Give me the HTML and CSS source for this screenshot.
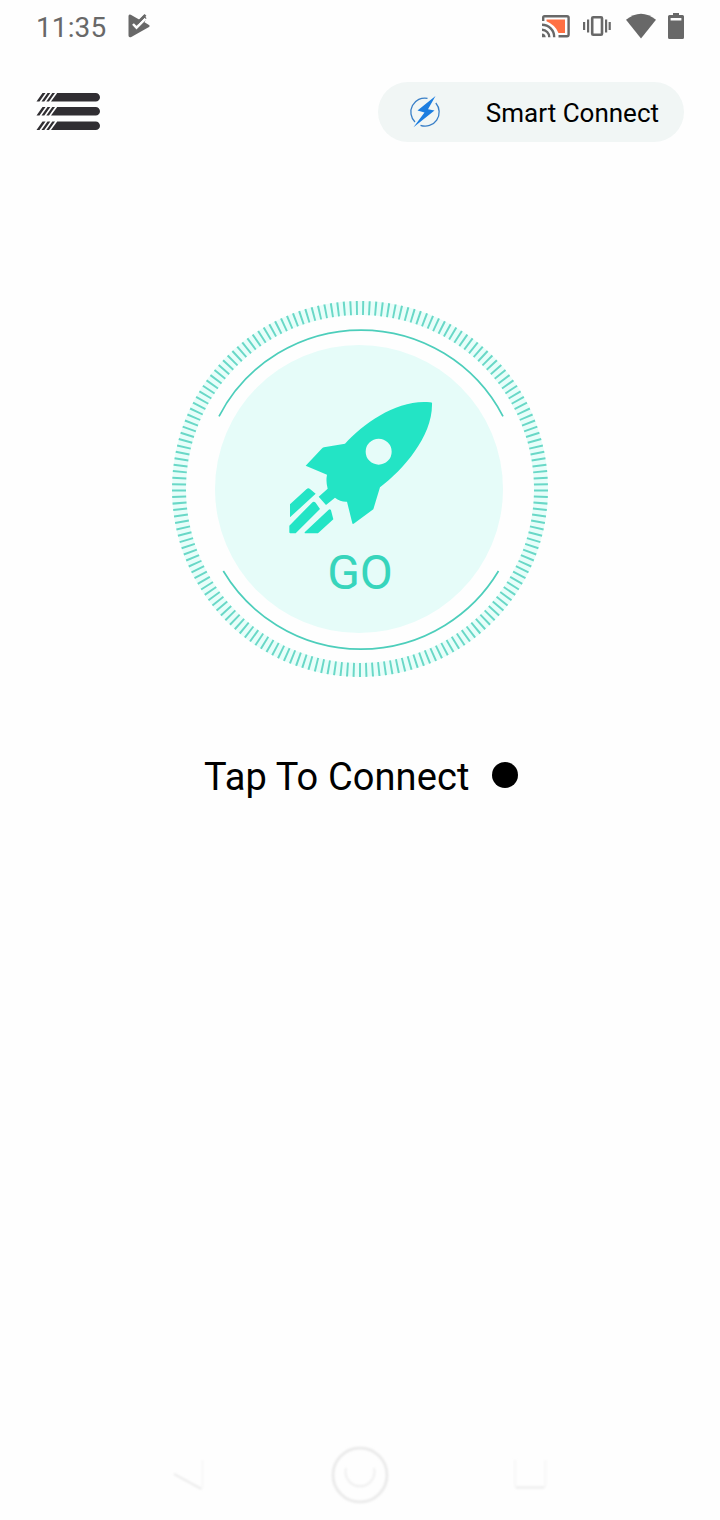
FILE: index.html
```html
<!DOCTYPE html>
<html lang="en">
<head>
<meta charset="utf-8">
<title>Smart Connect</title>
<link rel="stylesheet" href="styles.css">
</head>
<body>
<div class="screen">
  <div class="status">
    <span class="clock">11:35</span>
    <svg class="play" width="24" height="26" viewBox="0 0 24 26"><path d="M1.500 3.200Q1.500 .8 3.800 1.800L12.500 6.800L16.500 2.200L19.500 5L17.500 9.300L22 12Q23.500 13 22 14L4.300 24Q1.500 25 1.500 22.500Z" fill="#686868"/><path d="M6 11L9.500 14.600L18.500 5.600" fill="none" stroke="#fefefe" stroke-width="2.500"/><path d="M10 10.300L18.500 1.800" stroke="#686868" stroke-width="2.600"/></svg>
    <svg class="system" width="146" height="30" viewBox="540 10 146 30" fill="#686868">
      <path d="M546.500 19.500H565V33H558.500Q555.500 25 546.500 21.200Z" fill="#ff7043"/>
      <g fill="none" stroke="#686868" stroke-width="2.400"><path d="M543.200 21V17.500Q543.200 16.200 544.500 16.200H567Q568.600 16.200 568.600 17.800V34.500Q568.600 36.200 567 36.200H558.500"/><path d="M542 24.800A12.200 12.200 0 0 1 554.200 37.200M542 29.800A7.300 7.300 0 0 1 549.300 37.200"/></g><path d="M542 33.500A4 4 0 0 1 545.700 37.200H542Z"/>
      <rect x="592.200" y="17.200" width="9.800" height="17.600" rx="1" fill="none" stroke="#686868" stroke-width="2.600"/>
      <path d="M583 22h2.200v8H583zM587 19.500h2.200v13H587zM605 19.500h2.200v13H605zM608.600 22h2.200v8h-2.200z"/>
      <path d="M626 19.800Q641 7.500 656 19.800L641 38.500Z"/>
      <path fill-rule="evenodd" d="M669.500 15H673V13H679V15H682.500Q684 15 684 16.500V37.500Q684 39 682.500 39H669.500Q668 39 668 37.500V16.500Q668 15 669.500 15ZM670.600 18V20.500H681.400V18Z"/>
    </svg>
  </div>
  <div class="toolbar">
    <svg class="menu" width="66" height="40" viewBox="36 92 66 40" fill="#302e32">
      <defs><g id="bar"><path d="M36.500 8.600L42.500 0H45.500L39.500 8.600ZM41.500 8.600L47.500 0H50.300L44.300 8.600ZM46.300 8.600L52.300 0H55L49 8.600ZM51 8.600L57.200 0H95.700A4.300 4.300 0 0 1 95.700 8.600Z"/></g></defs>
      <use href="#bar" y="93"/><use href="#bar" y="107"/><use href="#bar" y="121.500"/>
    </svg>
    <div class="pill">
      <svg width="32" height="34" viewBox="409 95 32 34"><g fill="none" stroke="#397fc7" stroke-width="1.300"><path d="M427.500 98.300A14 14 0 0 0 415 122M435.800 103A14 14 0 0 1 420.500 125.300"/></g><path d="M435.500 96L417.500 110.500L424.500 112.500L413.500 127.300L434.500 110.500L428 109.200Z" fill="#1d7ee0"/></svg>
      <span>Smart Connect</span>
    </div>
  </div>
  <svg class="dial" width="380" height="380" viewBox="170 299 380 380">
    <circle cx="360" cy="489" r="181" fill="none" stroke="#e8fefa" stroke-width="14"/>
    <circle cx="360" cy="489" r="181" fill="none" stroke="#69d8c7" stroke-width="14" pathLength="181" stroke-dasharray=".31 .69" stroke-dashoffset=".155" transform="rotate(90 360 489)"/>
    <circle cx="359" cy="489" r="144" fill="#e6fcf9"/>
    <path d="M219 416.300A160 160 0 0 1 503 416.300M223.300 571A160.300 160.300 0 0 0 498.500 571" fill="none" stroke="#4dcebb" stroke-width="1.700"/>
    <g transform="translate(280 390) scale(.33333)" fill="#23e4c5">
      <path fill-rule="evenodd" d="M456 41Q458 37 450 37C354 27 254 98 195 161L132 172Q128 173 125 176L77 227L141 254Q137 275 143 296L116 320L138 345L165 323Q181 336 201 335L217 400Q218 404 223 400L280 358L300 292C371 238 458 138 456 41ZM335 185A39 39 0 1 1 257 185A39 39 0 1 1 335 185Z"/>
      <path d="M30 343L80 297Q85 293 90 297L107 311L30 382ZM28 407L96 338Q101 333 107 338L120 357L47 430H31Q28 430 28 427ZM74 427L146 359Q150 355 153 361L160 388L114 430H77Q73 430 74 427Z"/>
    </g>
    <text class="go" x="360" y="588.500" text-anchor="middle">GO</text>
  </svg>
  <div class="prompt"><span>Tap To Connect</span><i class="dot"></i></div>
  <svg class="nav" width="400" height="80" viewBox="160 1435 400 80" fill="none">
    <defs><filter id="soft" x="-20%" y="-20%" width="140%" height="140%"><feGaussianBlur stdDeviation=".9"/></filter></defs>
    <g filter="url(#soft)" stroke="#e8e8e8" stroke-width="1.800">
      <path d="M174 1474L201.500 1489"/><path d="M202.500 1460V1488" stroke="#f7f7f7"/>
      <circle cx="360" cy="1475" r="27" stroke-width="2.600"/>
      <path d="M346 1468A14.500 14.500 0 1 0 374 1468" stroke="#eee"/>
      <path d="M515 1460V1485Q515 1487.500 517 1487.500H543Q545.500 1487.500 545.500 1485V1460" stroke="#f6f6f6"/><path d="M516 1487.500H544" stroke="#ececec"/>
    </g>
  </svg>
</div>
</body>
</html>
```
FILE: styles.css
```css
body { margin: 0; background: #fefefe; font-family: Roboto, sans-serif; }
.screen { height: 1520px; display: flex; flex-direction: column; align-items: center; overflow: hidden; }
.status { width: 100%; height: 52px; box-sizing: border-box; padding: 0 34px 0 36px; display: flex; align-items: center; color: #686868; }
.clock { font-size: 28px; line-height: 34px; padding-top: 3px; letter-spacing: .1px; width: 91px; }
.play { display: block; }
.system { margin-left: auto; padding-bottom: 2px; }
.toolbar { width: 100%; height: 60px; margin-top: 30px; box-sizing: border-box; padding: 0 36px; display: flex; justify-content: space-between; align-items: center; }
.pill { width: 306px; height: 60px; box-sizing: border-box; padding: 0 25px 0 31px; border-radius: 30px; background: #f1f6f5; display: flex; justify-content: space-between; align-items: center; }
.pill span { font-size: 26px; line-height: 30px; color: #000; padding-top: 2px; white-space: nowrap; }
.dial { margin-top: 157px; flex: none; }
.go { font: 48px Roboto, sans-serif; fill: #37d5bc; }
.prompt { width: 314px; margin-top: 76px; margin-left: 2px; height: 44px; display: flex; justify-content: space-between; align-items: center; }
.prompt span { font-size: 38px; line-height: 44px; color: #000; white-space: nowrap; letter-spacing: .1px; padding-bottom: 1px; }
.dot { width: 26px; height: 26px; border-radius: 50%; background: #000; margin-bottom: 4px; }
.nav { margin-top: auto; margin-bottom: 5px; flex: none; }
```
